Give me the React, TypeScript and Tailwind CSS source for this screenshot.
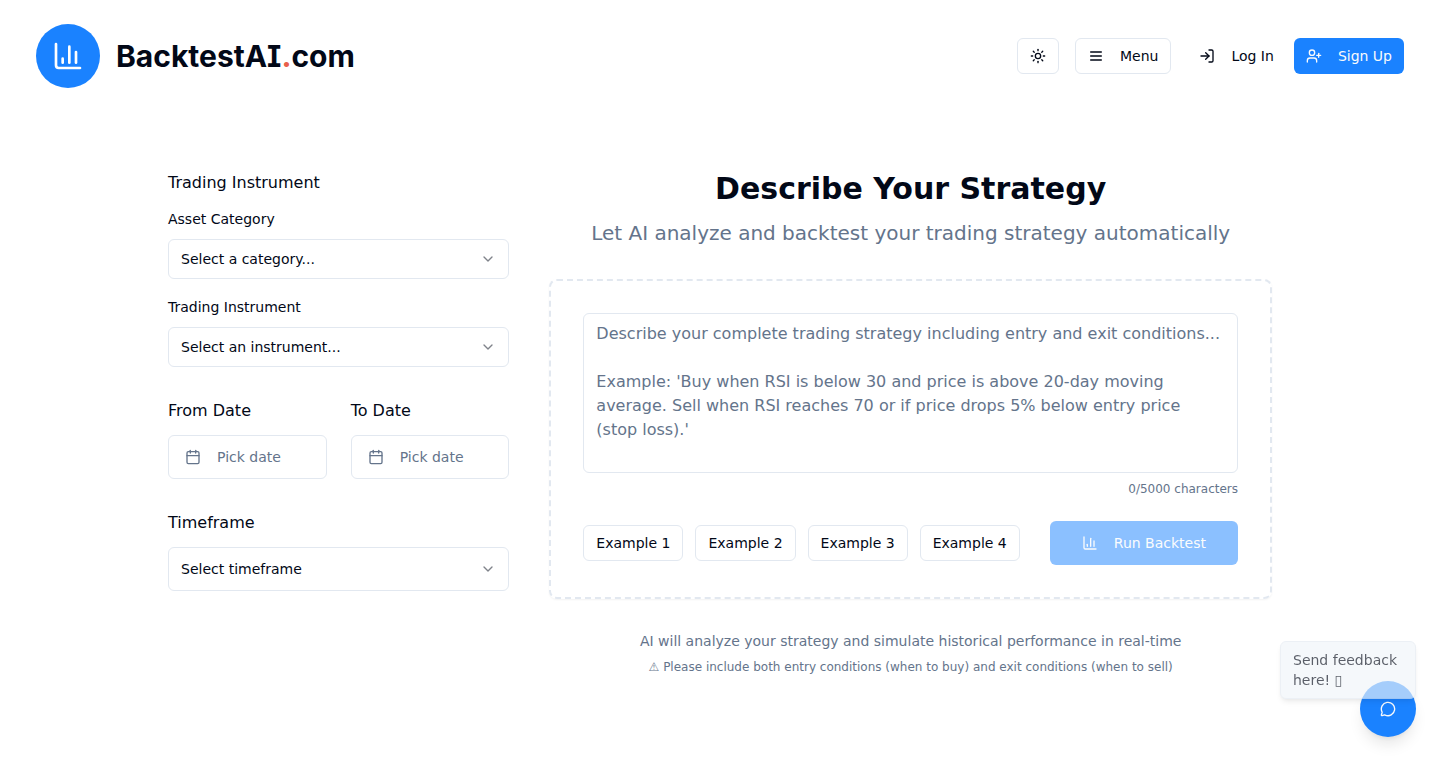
import { useState } from 'react';
import type { ReactNode } from 'react';
import { Calendar, ChartColumn, ChevronDown, LogIn, MessageCircle, Sun, UserPlus } from 'lucide-react';

const MAX_LENGTH = 5000;

const PLACEHOLDER = `Describe your complete trading strategy including entry and exit conditions...

Example: 'Buy when RSI is below 30 and price is above 20-day moving average. Sell when RSI reaches 70 or if price drops 5% below entry price (stop loss).'`;

const EXAMPLES = [
  'Buy when RSI drops below 30 and sell when it rises above 70.',
  'Buy when the 50-day SMA crosses above the 200-day SMA. Sell on the opposite cross.',
  'Buy when price closes below the lower Bollinger Band. Sell at the middle band.',
  'Buy when MACD crosses above its signal line. Sell when it crosses back below.',
];

const outlineButton =
  'inline-flex h-9 items-center justify-center rounded-md border border-[#e2e8f0] bg-white px-3 text-sm hover:bg-slate-100';

function MenuIcon() {
  return (
    <svg
      viewBox="0 0 24 24"
      fill="none"
      stroke="currentColor"
      strokeWidth="2"
      strokeLinecap="round"
      className="size-4"
      aria-hidden="true"
    >
      <path d="M4 6h16M4 12h16M4 18h16" />
    </svg>
  );
}

function SelectField({ id, placeholder, options, className }: {
  id: string;
  placeholder: string;
  options: string[];
  className: string;
}) {
  return (
    <div className="relative">
      <select
        id={id}
        defaultValue=""
        className={`w-full appearance-none rounded-md border border-[#e2e8f0] bg-white px-3 text-sm ${className}`}
      >
        <option value="">{placeholder}</option>
        {options.map((option) => (
          <option key={option}>{option}</option>
        ))}
      </select>
      <ChevronDown className="pointer-events-none absolute inset-y-0 right-[13px] my-auto size-4 opacity-50" />
    </div>
  );
}

function DateField({ id, label }: { id: string; label: string }) {
  return (
    <div>
      <label htmlFor={id} className="mb-3 block">{label}</label>
      <button
        id={id}
        type="button"
        className="flex h-11 w-full items-center gap-4 rounded-md border border-[#e2e8f0] bg-white px-4 text-sm text-[#64748b]"
      >
        <Calendar className="size-4" />
        Pick date
      </button>
    </div>
  );
}

function Header({ children }: { children: ReactNode }) {
  return (
    <header className="flex items-center justify-between px-9 py-6">
      <a href="/" className="flex items-center gap-4">
        <span className="flex size-16 items-center justify-center rounded-full bg-[#1a82ff] text-white">
          <ChartColumn className="size-8" />
        </span>
        <span className="font-['Inter',sans-serif] text-3xl font-bold [font-feature-settings:'cv08']">
          BacktestAI<span className="text-[#e8604c]">.</span>com
        </span>
      </a>
      {children}
    </header>
  );
}

export default function App() {
  const [strategy, setStrategy] = useState('');

  return (
    <div className="min-h-screen bg-white font-['DejaVu_Sans',sans-serif] text-base text-[#020817]">
      <Header>
        <nav className="flex items-center gap-4">
          <button type="button" aria-label="Toggle theme" className={outlineButton}>
            <Sun className="size-4" />
          </button>
          <button type="button" className={`${outlineButton} gap-4`}>
            <MenuIcon />
            Menu
          </button>
          <div className="flex gap-2">
            <a href="/login" className="inline-flex h-9 items-center gap-4 rounded-md px-3 text-sm">
              <LogIn className="size-4" />
              Log In
            </a>
            <a
              href="/signup"
              className="inline-flex h-9 items-center gap-4 rounded-md bg-[#1a82ff] px-3 text-sm text-slate-50"
            >
              <UserPlus className="size-4" />
              Sign Up
            </a>
          </div>
        </nav>
      </Header>

      <main className="mx-auto grid max-w-6xl grid-cols-3 gap-10 px-6 pt-[59px]">
        <section className="flex flex-col gap-8">
          <div>
            <h2 className="mb-3">Trading Instrument</h2>
            <label htmlFor="category" className="mb-2 block text-sm leading-6">Asset Category</label>
            <SelectField
              id="category"
              placeholder="Select a category..."
              options={['Crypto', 'Forex', 'Stocks']}
              className="h-10"
            />
            <label htmlFor="instrument" className="mt-4 mb-2 block text-sm leading-6">Trading Instrument</label>
            <SelectField
              id="instrument"
              placeholder="Select an instrument..."
              options={['BTC/USD', 'EUR/USD', 'AAPL']}
              className="h-10"
            />
          </div>

          <div className="grid grid-cols-2 gap-6">
            <DateField id="from-date" label="From Date" />
            <DateField id="to-date" label="To Date" />
          </div>

          <div>
            <label htmlFor="timeframe" className="mb-3 block">Timeframe</label>
            <SelectField
              id="timeframe"
              placeholder="Select timeframe"
              options={['1 hour', '4 hours', '1 day']}
              className="h-11"
            />
          </div>
        </section>

        <section className="col-span-2 text-center">
          <h1 className="mb-3 text-3xl font-bold">Describe Your Strategy</h1>
          <p className="mb-8 text-xl text-[#64748b]">
            Let AI analyze and backtest your trading strategy automatically
          </p>

          <div className="rounded-lg border-2 border-dashed border-[#e2e8f0] p-8 shadow-xs">
            <textarea
              aria-label="Trading strategy"
              value={strategy}
              maxLength={MAX_LENGTH}
              onChange={(e) => setStrategy(e.target.value)}
              placeholder={PLACEHOLDER}
              className="block h-40 w-full resize-none rounded-md border border-[#e2e8f0] px-3 py-2 text-base placeholder:text-[#64748b]"
            />
            <p className="mt-2 mb-6 text-right text-xs text-[#64748b]">
              {strategy.length}/{MAX_LENGTH} characters
            </p>
            <div className="flex items-center justify-between">
              <div className="flex gap-3">
                {EXAMPLES.map((example, i) => (
                  <button key={example} type="button" onClick={() => setStrategy(example)} className={outlineButton}>
                    Example {i + 1}
                  </button>
                ))}
              </div>
              <button
                type="button"
                disabled={!strategy}
                className="inline-flex h-11 items-center gap-4 rounded-md bg-[#1a82ff] px-8 text-sm text-slate-50 disabled:opacity-50"
              >
                <ChartColumn className="size-4" />
                Run Backtest
              </button>
            </div>
          </div>

          <p className="mt-8 text-sm text-[#64748b]">
            AI will analyze your strategy and simulate historical performance in real-time
          </p>
          <p className="mt-2 text-xs text-[#64748b]">
            ⚠ Please include both entry conditions (when to buy) and exit conditions (when to sell)
          </p>
        </section>
      </main>

      <div className="fixed right-6 bottom-6">
        <button
          type="button"
          aria-label="Send feedback"
          className="flex size-14 items-center justify-center rounded-full bg-[#1a82ff] text-slate-50 shadow-lg"
        >
          <MessageCircle className="size-4" />
        </button>
        <div
          role="tooltip"
          className="absolute right-0 bottom-[38px] w-[136px] rounded-md border border-[#e2e8f0] bg-[#f0f5f9] px-3 py-2 text-sm opacity-65 shadow-md"
        >
          Send feedback here! ▯
        </div>
      </div>
    </div>
  );
}
